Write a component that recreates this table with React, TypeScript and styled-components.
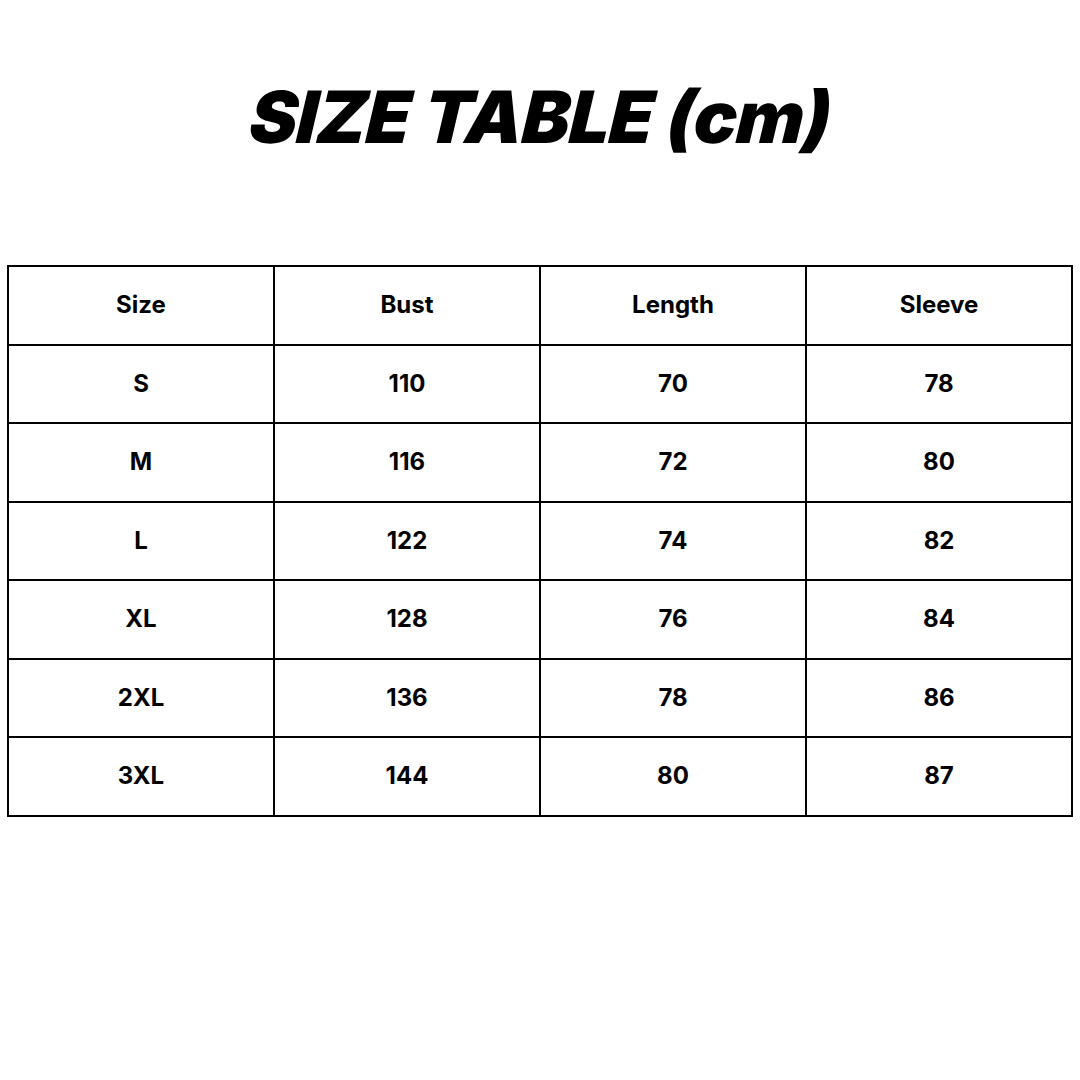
import React from "react";
import styled, { createGlobalStyle } from "styled-components";

const GlobalStyle = createGlobalStyle`
  html, body {
    margin: 0;
    padding: 0;
    background: #ffffff;
  }
  body {
    font-family: Inter, "Liberation Sans", sans-serif;
    color: #000000;
  }
`;

const headers = ["Size", "Bust", "Length", "Sleeve"];

const rows: string[][] = [
  ["S", "110", "70", "78"],
  ["M", "116", "72", "80"],
  ["L", "122", "74", "82"],
  ["XL", "128", "76", "84"],
  ["2XL", "136", "78", "86"],
  ["3XL", "144", "80", "87"],
];

export default function App() {
  return (
    <>
      <GlobalStyle />
      <Page>
        <Title>SIZE TABLE (cm)</Title>
        <Table>
          <thead>
            <tr>
              {headers.map((h) => (
                <Cell as="th" key={h}>
                  {h}
                </Cell>
              ))}
            </tr>
          </thead>
          <tbody>
            {rows.map((r) => (
              <tr key={r[0]}>
                {r.map((v, i) => (
                  <Cell key={i}>{v}</Cell>
                ))}
              </tr>
            ))}
          </tbody>
        </Table>
      </Page>
    </>
  );
}

const Page = styled.div`
  width: 1080px;
  height: 1080px;
  display: flex;
  flex-direction: column;
  align-items: center;
  box-sizing: border-box;
  padding-top: 72px;
`;

const Title = styled.h1`
  margin: 0;
  font-family: Inter, "Liberation Sans", sans-serif;
  font-weight: 900;
  font-style: italic;
  font-size: 72px;
  line-height: 90px;
  letter-spacing: -0.8px;
  transform: skewX(-4deg);
`;

const Table = styled.table`
  margin-top: 103px;
  width: 1066px;
  border-collapse: collapse;
  table-layout: fixed;
  border: 2px solid #000;
`;

const Cell = styled.td`
  height: 78.5px;
  padding: 0;
  box-sizing: border-box;
  border: 2px solid #000;
  text-align: center;
  vertical-align: middle;
  font-family: Inter, "Liberation Sans", sans-serif;
  font-weight: 700;
  font-size: 24px;
  line-height: 1;
`;
